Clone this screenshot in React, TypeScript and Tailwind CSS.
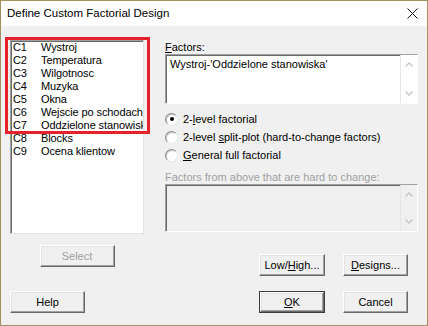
import React from "react";

const items: [string, string][] = [
  ["C1", "Wystroj"],
  ["C2", "Temperatura"],
  ["C3", "Wilgotnosc"],
  ["C4", "Muzyka"],
  ["C5", "Okna"],
  ["C6", "Wejscie po schodach"],
  ["C7", "Oddzielone stanowisk"],
  ["C8", "Blocks"],
  ["C9", "Ocena klientow"],
];

function Btn({
  children,
  className,
  disabled,
  def,
}: {
  children: React.ReactNode;
  className: string;
  disabled?: boolean;
  def?: boolean;
}) {
  const inner = (
    <div
      className={
        "w-full h-full flex items-center justify-center bg-[#f0f0f0] border border-t-white border-l-white border-r-[#696969] border-b-[#696969] shadow-[inset_-1px_-1px_0_#a0a0a0,inset_1px_1px_0_#e3e3e3] " +
        (disabled ? "text-[#a0a0a0]" : "text-black")
      }
    >
      {children}
    </div>
  );
  if (def) {
    return <div className={className + " border border-[#3c3c3c]"}>{inner}</div>;
  }
  return <div className={className}>{inner}</div>;
}

function Chevron({ up }: { up?: boolean }) {
  return (
    <svg width="8" height="5" viewBox="0 0 8 5">
      <polyline
        points={up ? "0.5,4.5 4,1 7.5,4.5" : "0.5,0.5 4,4 7.5,0.5"}
        fill="none"
        stroke="#c4c4c4"
        strokeWidth="1.3"
      />
    </svg>
  );
}

function Scroll({ bg }: { bg: string }) {
  return (
    <div className={"w-[17px] h-full flex flex-col justify-between items-center py-[7px] border-l border-[#e6e6e6] " + bg}>
      <Chevron up />
      <Chevron />
    </div>
  );
}

function Radio({ checked }: { checked?: boolean }) {
  return (
    <div className="w-[13px] h-[13px] rounded-full border border-t-[#8a8a8a] border-l-[#8a8a8a] border-r-[#e8e8e8] border-b-[#e8e8e8] bg-white flex items-center justify-center shadow-[inset_1px_1px_0_#c8c8c8]">
      {checked && <div className="w-[4px] h-[4px] rounded-full bg-black" />}
    </div>
  );
}

export default function App() {
  return (
    <div className="relative w-[428px] h-[326px] border border-[#a38f5f] bg-[#f0f0f0] flex flex-col text-[11px] text-black font-['Liberation_Sans',Arial,sans-serif] overflow-hidden">
      <div className="h-[25px] shrink-0 bg-white flex items-center justify-between pl-[6px] pr-[9px]">
        <span className="text-[11.5px] leading-none">Define Custom Factorial Design</span>
        <svg width="11" height="11" viewBox="0 0 11 11">
          <path d="M0.5 0.5 L10.5 10.5 M10.5 0.5 L0.5 10.5" stroke="#111" strokeWidth="1" />
        </svg>
      </div>
      <div className="flex flex-col pt-[14px] pl-[9px] pr-[9px]">
        <div className="flex gap-[21px]">
          <div className="w-[134px] flex flex-col items-center">
            <div className="self-stretch h-[194px] bg-white border border-t-[#a0a0a0] border-l-[#a0a0a0] border-r-[#e3e3e3] border-b-[#e3e3e3] shadow-[inset_1px_1px_0_#696969] pl-[2px] overflow-hidden">
              {items.map(([c, n]) => (
                <div key={c} className="flex h-[13px] leading-[13px] whitespace-nowrap tracking-[-0.1px]">
                  <span className="w-[28px] shrink-0">{c}</span>
                  <span>{n}</span>
                </div>
              ))}
            </div>
            <Btn className="mt-[11px] w-[75px] h-[22px]" disabled>
              Select
            </Btn>
          </div>
          <div className="w-[253px] flex flex-col">
            <div className="h-[14px] leading-[14px]">
              <u>F</u>actors:
            </div>
            <div className="h-[50px] flex bg-white border border-t-[#a0a0a0] border-l-[#a0a0a0] border-r-white border-b-white shadow-[inset_1px_1px_0_#696969]">
              <div className="flex-1 pl-[4px] pt-[3px] leading-[13px] whitespace-nowrap">Wystroj-'Oddzielone stanowiska'</div>
              <Scroll bg="bg-white" />
            </div>
            <div className="mt-[6px] flex flex-col">
              <div className="h-[18px] flex items-center gap-[5px]">
                <Radio checked />
                <span>
                  2-<u>l</u>evel factorial
                </span>
              </div>
              <div className="h-[18px] flex items-center gap-[5px]">
                <Radio />
                <span>
                  2-level <u>s</u>plit-plot (hard-to-change factors)
                </span>
              </div>
              <div className="h-[19px] flex items-center gap-[5px]">
                <Radio />
                <span>
                  <u>G</u>eneral full factorial
                </span>
              </div>
            </div>
            <div className="mt-[5px] h-[14px] leading-[14px] text-[#a0a0a0]">Factors from above that are hard to change:</div>
            <div className="h-[48px] flex bg-[#f0f0f0] border border-t-[#a0a0a0] border-l-[#a0a0a0] border-r-white border-b-white shadow-[inset_1px_1px_0_#696969]">
              <div className="flex-1" />
              <Scroll bg="bg-[#f0f0f0]" />
            </div>
            <div className="mt-[22px] pl-[94px] flex gap-[18px]">
              <Btn className="w-[66px] h-[22px]">
                <span>
                  Low/<u>H</u>igh...
                </span>
              </Btn>
              <Btn className="w-[65px] h-[22px]">
                <span>
                  <u>D</u>esigns...
                </span>
              </Btn>
            </div>
          </div>
        </div>
        <div className="mt-[15px] flex justify-between pr-[10px]">
          <Btn className="w-[75px] h-[22px]">Help</Btn>
          <div className="flex gap-[18px]">
            <Btn className="w-[66px] h-[22px]" def>
              <span>
                <u>O</u>K
              </span>
            </Btn>
            <Btn className="w-[65px] h-[22px]">Cancel</Btn>
          </div>
        </div>
      </div>
      <div className="absolute left-[4px] top-[36px] w-[145px] h-[97px] border-[3px] border-[#e6212b] pointer-events-none" />
    </div>
  );
}
